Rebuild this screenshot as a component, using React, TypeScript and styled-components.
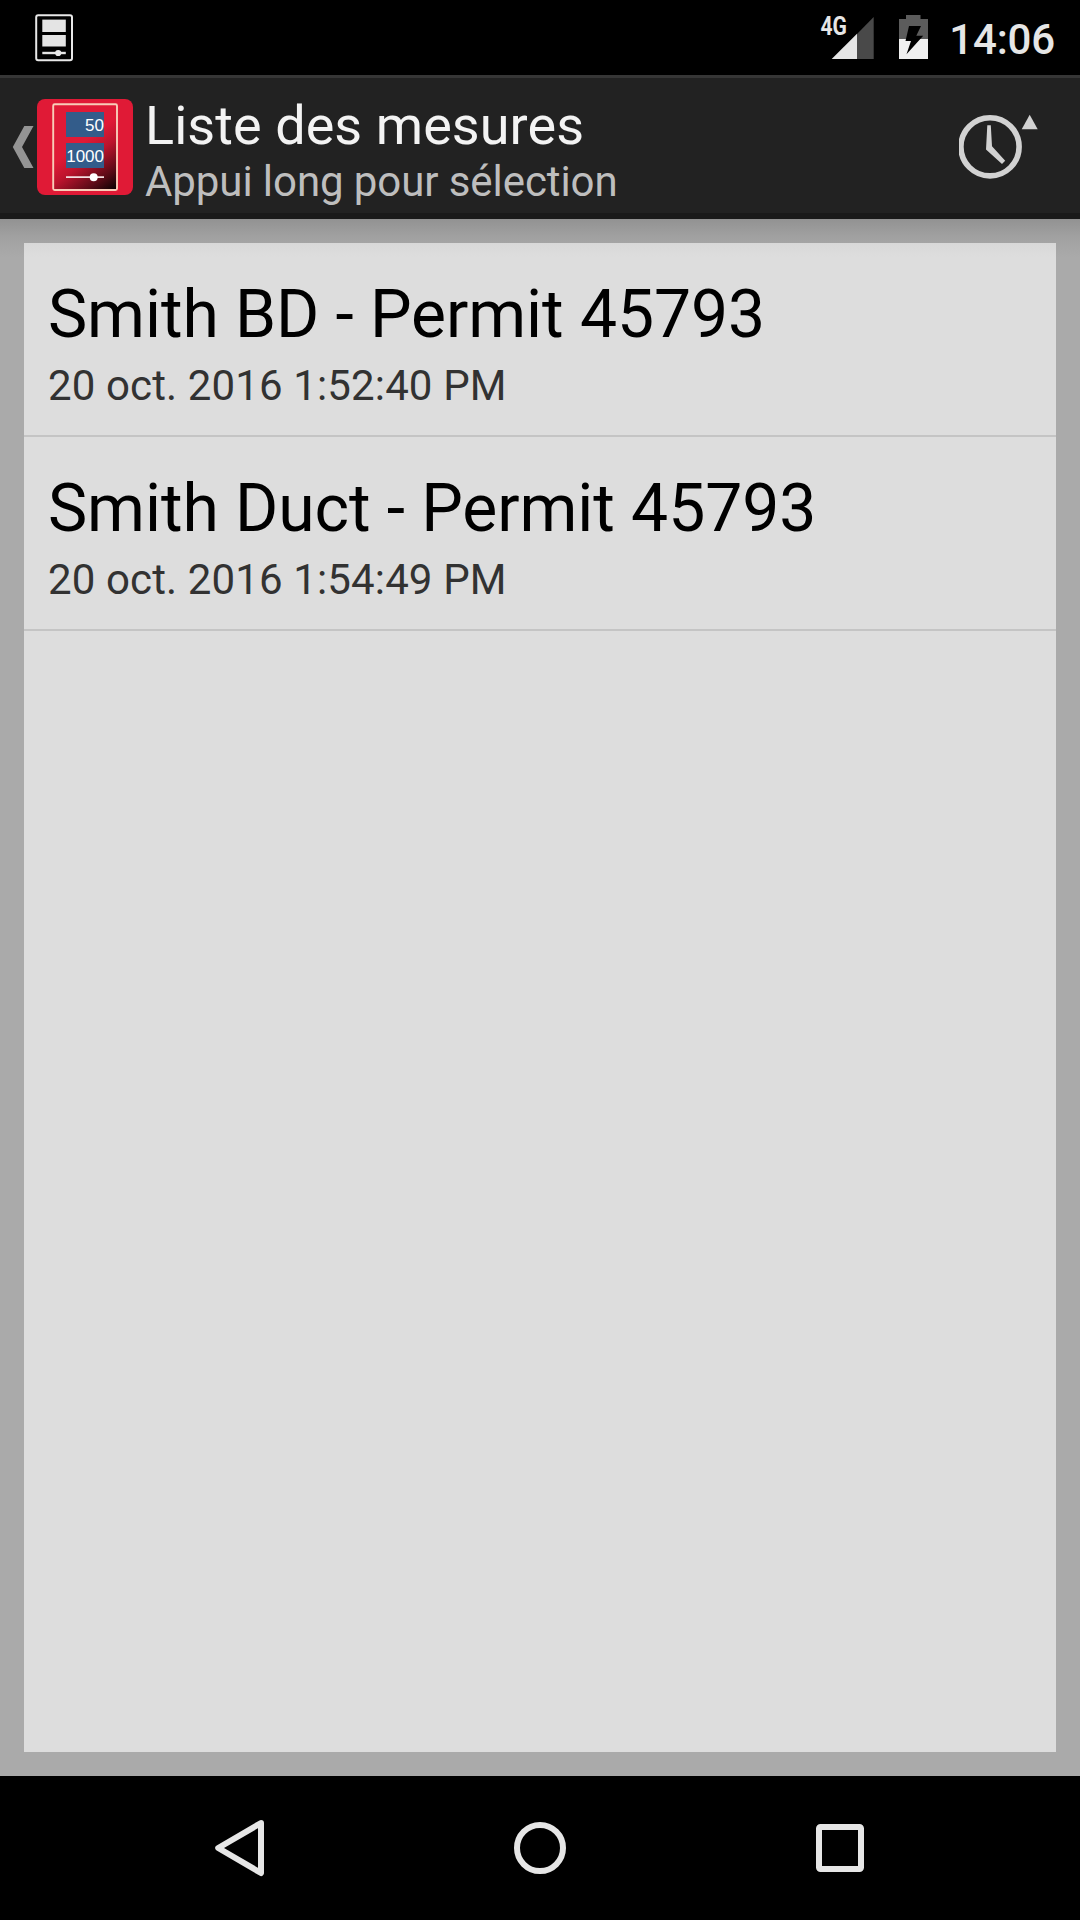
import React from 'react';
import styled, { createGlobalStyle } from 'styled-components';

const GlobalStyle = createGlobalStyle`
  * { box-sizing: border-box; }
  body { margin: 0; background: #000; }
  svg { display: block; flex: none; }
`;

const Screen = styled.div`
  width: 1080px;
  height: 1920px;
  display: flex;
  flex-direction: column;
  overflow: hidden;
  background: #000;
  font-family: Roboto, 'Noto Sans', sans-serif;
`;

const StatusBar = styled.header`
  height: 75px;
  flex: none;
  display: flex;
  align-items: stretch;
  justify-content: space-between;
  padding: 0 25px 0 30px;
  background: #000;
`;

const StatusTray = styled.div`
  display: flex;
`;

const Clock = styled.time`
  margin-left: 21px;
  padding-top: 15px;
  font-size: 42px;
  font-weight: 500;
  line-height: 50px;
  letter-spacing: -0.15px;
  color: #e6e6e6;
`;

const ActionBar = styled.div`
  height: 144px;
  flex: none;
  display: flex;
  align-items: stretch;
  background: #222;
  border-top: 3px solid #363636;
  border-bottom: 6px solid #1a1a1a;
`;

const UpButton = styled.button`
  width: 145px;
  padding: 0;
  border: 0;
  background: none;
`;

const Titles = styled.div`
  flex: 1;
  padding-top: 16px;
`;

const Title = styled.h1`
  margin: 0;
  font-size: 54px;
  font-weight: 400;
  line-height: 64px;
  letter-spacing: 0.06px;
  color: #f3f3f3;
`;

const Subtitle = styled.p`
  margin: -1px 0 0;
  font-size: 42px;
  line-height: 50px;
  letter-spacing: -0.08px;
  color: #bebebe;
`;

const SortButton = styled.button`
  width: 121px;
  padding: 0;
  border: 0;
  background: none;
`;

const Content = styled.main`
  flex: 1;
  display: flex;
  padding: 24px;
  background: linear-gradient(#929292 0, #a1a1a1 18px, #aaa 38px);
`;

const List = styled.ul`
  flex: 1;
  margin: 0;
  padding: 0;
  list-style: none;
  background: linear-gradient(#d8d8d8 0, #ddd 14px);
`;

const Row = styled.li`
  height: 194px;
  padding: 33px 24px 0;
  border-bottom: 2px solid #c4c4c4;
`;

const RowTitle = styled.div`
  font-size: 66px;
  line-height: 78px;
  letter-spacing: -0.08px;
  color: #000;
`;

const RowDate = styled.div`
  margin-top: 7px;
  font-size: 42px;
  line-height: 50px;
  letter-spacing: 0.13px;
  color: #323232;
`;

const NavBar = styled.nav`
  height: 144px;
  flex: none;
  display: flex;
  justify-content: center;
  background: #000;
`;

const NavButton = styled.button`
  width: 300px;
  padding: 0;
  border: 0;
  background: none;
  display: flex;
  align-items: center;
  justify-content: center;
`;

const measures = [
  { name: 'Smith BD - Permit 45793', date: '20 oct. 2016 1:52:40 PM' },
  { name: 'Smith Duct - Permit 45793', date: '20 oct. 2016 1:54:49 PM' },
];

const NotificationIcon = () => (
  <svg width="50" height="75" viewBox="30 0 50 75">
    <rect x="36.2" y="15.2" width="35.8" height="45" rx="2" fill="none" stroke="#e8e8e8" strokeWidth="2" />
    <rect x="42.3" y="19.6" width="23.5" height="12.4" fill="#e4e4e4" />
    <rect x="42.3" y="35" width="23.5" height="11.5" fill="#e4e4e4" />
    <rect x="42.3" y="51.8" width="23.5" height="2.4" fill="#e4e4e4" />
    <circle cx="58.2" cy="53" r="3.1" fill="#e8e8e8" />
  </svg>
);

const SignalBattery = () => (
  <svg width="110" height="75" viewBox="818 0 110 75">
    <path d="M857 34L873.7 17V59H857Z" fill="#494949" />
    <path d="M831.7 59L857 33.7V59Z" fill="#e6e6e6" />
    <text
      x="820.5"
      y="35.3"
      textLength="26.5"
      lengthAdjust="spacingAndGlyphs"
      fontFamily="Roboto, sans-serif"
      fontSize="25"
      fontWeight="700"
      fill="#e6e6e6"
    >
      4G
    </text>
    <path d="M906 15H920.5V19H928V39H899V19H906Z" fill="#5c5c5c" />
    <path d="M899 39H928V59H899Z" fill="#f0f0f0" />
    <path d="M909 26H921L916.3 35.8H923.2L906.5 54.2L911 41H905.5Z" fill="#000" />
  </svg>
);

const UpIcon = () => (
  <svg width="145" height="135" viewBox="0 78 145 135">
    <defs>
      <linearGradient id="device" gradientUnits="userSpaceOnUse" x1="80" y1="144" x2="114" y2="190">
        <stop offset="0" stopColor="#e01a36" />
        <stop offset="0.3" stopColor="#bd142d" />
        <stop offset="0.7" stopColor="#5e0b17" />
        <stop offset="1" stopColor="#0c0203" />
      </linearGradient>
    </defs>
    <path d="M24.3 126H33.5L22 147L33.5 168H24.3L12.8 147Z" fill="#949494" />
    <rect x="37" y="99" width="96" height="96" rx="8" fill="#e01a36" />
    <rect x="53.2" y="104.2" width="63.8" height="85.8" rx="1.5" fill="url(#device)" stroke="#f8cdb8" strokeWidth="1.9" />
    <rect x="66" y="112" width="38" height="25" fill="#335c8a" />
    <rect x="66" y="143" width="38" height="25" fill="#335c8a" />
    <g fill="#fff" fontFamily="'Liberation Sans', Arial, sans-serif" fontSize="17" textAnchor="end">
      <text x="104" y="131">50</text>
      <text x="104" y="162">1000</text>
    </g>
    <path d="M66 177.2H104" stroke="#f3dfe0" strokeWidth="1.8" />
    <circle cx="93.7" cy="177.2" r="4" fill="#fff" />
  </svg>
);

const SortByTimeIcon = () => (
  <svg width="121" height="135" viewBox="959 78 121 135" fill="#d2d2d2">
    <circle cx="990" cy="146.8" r="29.1" fill="none" stroke="#d2d2d2" strokeWidth="5.6" />
    <path d="M987.3 125.3H990.8L992 146.3L1005.2 160.8L1002 164L986 149.5Z" />
    <path d="M1029.7 114.8L1037.7 129.3H1021.7Z" />
  </svg>
);

export default function App() {
  return (
    <Screen>
      <GlobalStyle />
      <StatusBar>
        <NotificationIcon />
        <StatusTray>
          <SignalBattery />
          <Clock>14:06</Clock>
        </StatusTray>
      </StatusBar>
      <ActionBar>
        <UpButton>
          <UpIcon />
        </UpButton>
        <Titles>
          <Title>Liste des mesures</Title>
          <Subtitle>Appui long pour sélection</Subtitle>
        </Titles>
        <SortButton>
          <SortByTimeIcon />
        </SortButton>
      </ActionBar>
      <Content>
        <List>
          {measures.map((measure) => (
            <Row key={measure.name}>
              <RowTitle>{measure.name}</RowTitle>
              <RowDate>{measure.date}</RowDate>
            </Row>
          ))}
        </List>
      </Content>
      <NavBar>
        <NavButton>
          <svg width="60" height="60" viewBox="210 1818 60 60">
            <path
              d="M261 1823L218.2 1848L261 1873Z"
              fill="none"
              stroke="#e6e6e6"
              strokeWidth="6"
              strokeLinejoin="round"
            />
          </svg>
        </NavButton>
        <NavButton>
          <svg width="60" height="60" viewBox="0 0 60 60">
            <circle cx="30" cy="30" r="23" fill="none" stroke="#e6e6e6" strokeWidth="6" />
          </svg>
        </NavButton>
        <NavButton>
          <svg width="60" height="60" viewBox="0 0 60 60">
            <rect x="9" y="9" width="42" height="42" rx="1.5" fill="none" stroke="#e6e6e6" strokeWidth="6" />
          </svg>
        </NavButton>
      </NavBar>
    </Screen>
  );
}
